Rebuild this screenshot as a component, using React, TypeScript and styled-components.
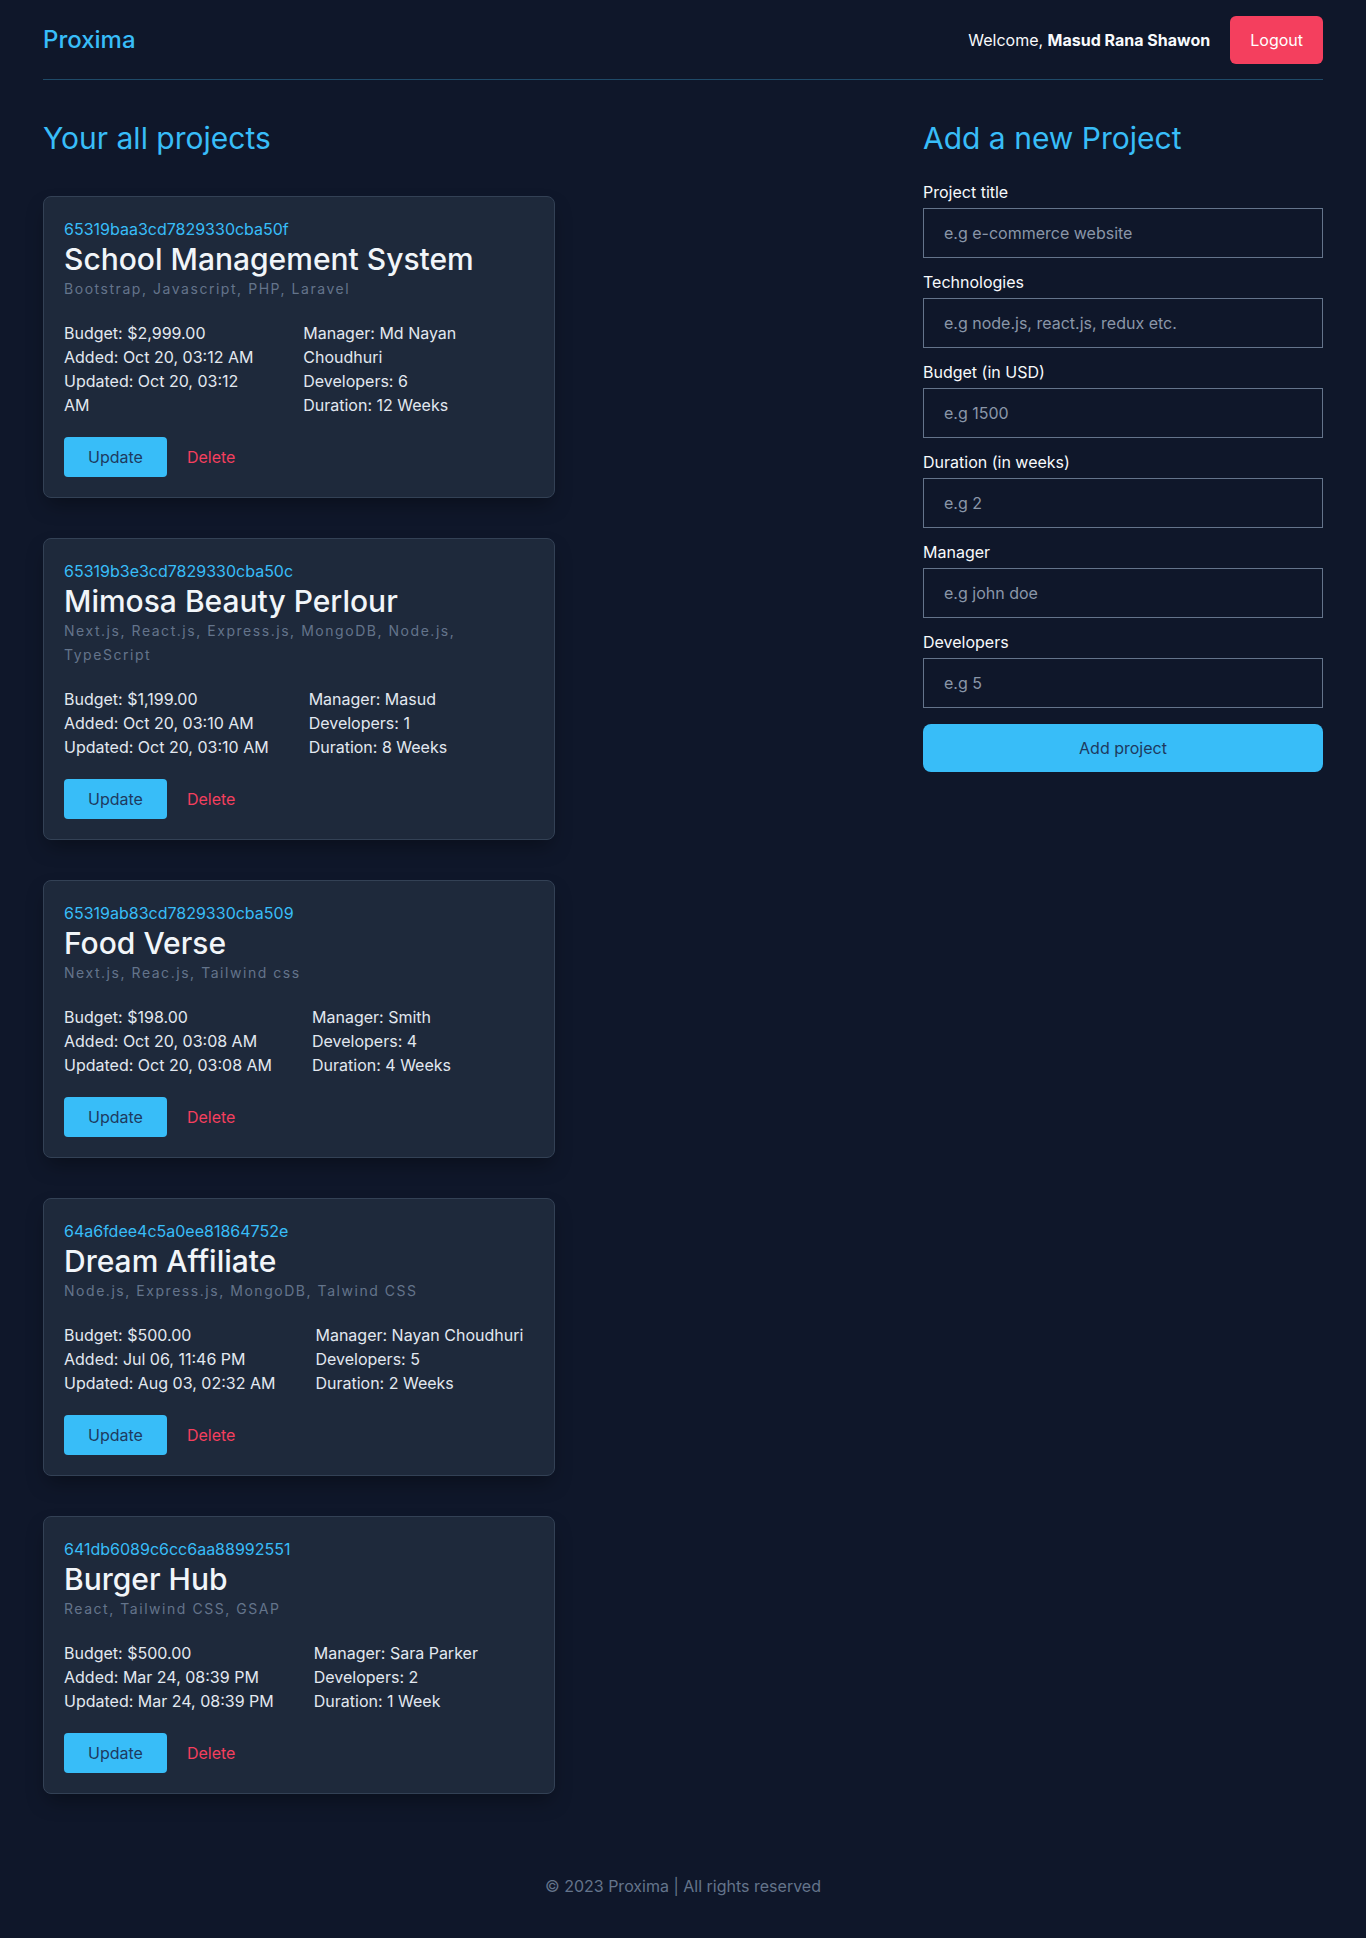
import React from "react";
import styled, { createGlobalStyle } from "styled-components";

type Project = {
  id: string;
  title: string;
  tech: string;
  budget: string;
  added: string;
  updated: string;
  manager: string;
  developers: number;
  duration: string;
};

const projects: Project[] = [
  {
    id: "65319baa3cd7829330cba50f",
    title: "School Management System",
    tech: "Bootstrap, Javascript, PHP, Laravel",
    budget: "$2,999.00",
    added: "Oct 20, 03:12 AM",
    updated: "Oct 20, 03:12 AM",
    manager: "Md Nayan Choudhuri",
    developers: 6,
    duration: "12 Weeks",
  },
  {
    id: "65319b3e3cd7829330cba50c",
    title: "Mimosa Beauty Perlour",
    tech: "Next.js, React.js, Express.js, MongoDB, Node.js, TypeScript",
    budget: "$1,199.00",
    added: "Oct 20, 03:10 AM",
    updated: "Oct 20, 03:10 AM",
    manager: "Masud",
    developers: 1,
    duration: "8 Weeks",
  },
  {
    id: "65319ab83cd7829330cba509",
    title: "Food Verse",
    tech: "Next.js, Reac.js, Tailwind css",
    budget: "$198.00",
    added: "Oct 20, 03:08 AM",
    updated: "Oct 20, 03:08 AM",
    manager: "Smith",
    developers: 4,
    duration: "4 Weeks",
  },
  {
    id: "64a6fdee4c5a0ee81864752e",
    title: "Dream Affiliate",
    tech: "Node.js, Express.js, MongoDB, Talwind CSS",
    budget: "$500.00",
    added: "Jul 06, 11:46 PM",
    updated: "Aug 03, 02:32 AM",
    manager: "Nayan Choudhuri",
    developers: 5,
    duration: "2 Weeks",
  },
  {
    id: "641db6089c6cc6aa88992551",
    title: "Burger Hub",
    tech: "React, Tailwind CSS, GSAP",
    budget: "$500.00",
    added: "Mar 24, 08:39 PM",
    updated: "Mar 24, 08:39 PM",
    manager: "Sara Parker",
    developers: 2,
    duration: "1 Week",
  },
];

const fields = [
  { label: "Project title", placeholder: "e.g e-commerce website" },
  { label: "Technologies", placeholder: "e.g node.js, react.js, redux etc." },
  { label: "Budget (in USD)", placeholder: "e.g 1500" },
  { label: "Duration (in weeks)", placeholder: "e.g 2" },
  { label: "Manager", placeholder: "e.g john doe" },
  { label: "Developers", placeholder: "e.g 5" },
];

const GlobalStyle = createGlobalStyle`
  * { box-sizing: border-box; }
  body {
    margin: 0;
    background: #0f172a;
    color: #e2e8f0;
    font-family: Inter, "Noto Sans", sans-serif;
    font-size: 16px;
    line-height: 24px;
  }
`;

const Page = styled.div`
  min-height: 100vh;
  display: flex;
  flex-direction: column;
`;

const Container = styled.div`
  width: 1280px;
  margin: 0 auto;
`;

const Header = styled.header`
  display: flex;
  align-items: center;
  justify-content: space-between;
  padding: 16px 0 15px;
  border-bottom: 1px solid #1f4a68;
`;

const Logo = styled.a`
  color: #38bdf8;
  font-size: 24px;
  line-height: 32px;
  font-weight: 500;
  text-decoration: none;
`;

const UserArea = styled.div`
  display: flex;
  align-items: center;
  gap: 20px;
  color: #f8fafc;
  b { font-weight: 700; }
`;

const LogoutButton = styled.button`
  background: #f43f5e;
  color: #fff;
  border: none;
  border-radius: 6px;
  padding: 12px 20px;
  font: inherit;
  font-size: 16px;
  line-height: 24px;
  cursor: pointer;
`;

const Main = styled.main`
  display: flex;
  justify-content: space-between;
  padding: 40px 0 40px;
`;

const LeftColumn = styled.section`
  width: 512px;
`;

const RightColumn = styled.section`
  width: 400px;
`;

const Heading = styled.h2<{ $gap: number }>`
  margin: 0 0 ${(p) => p.$gap}px;
  color: #38bdf8;
  font-size: 30px;
  line-height: 36px;
  font-weight: 400;
`;

const CardList = styled.div`
  display: flex;
  flex-direction: column;
  gap: 40px;
`;

const Card = styled.article`
  background: #1e293b;
  border: 1px solid #334155;
  border-radius: 8px;
  padding: 20px;
  box-shadow: 0 10px 20px -4px rgba(0, 0, 0, 0.35);
`;

const ProjectId = styled.div`
  color: #38bdf8;
  font-size: 16px;
  line-height: 24px;
`;

const ProjectTitle = styled.h3`
  margin: 0;
  color: #f1f5f9;
  font-size: 30px;
  line-height: 36px;
  font-weight: 500;
`;

const Tech = styled.p`
  margin: 0;
  color: #64748b;
  font-size: 14px;
  line-height: 24px;
  letter-spacing: 0.11em;
`;

const Details = styled.div`
  display: flex;
  gap: 40px;
  margin-top: 20px;
  color: #e2e8f0;
`;

const DetailCol = styled.div`
  display: flex;
  flex-direction: column;
`;

const Actions = styled.div`
  display: flex;
  align-items: center;
  gap: 20px;
  margin-top: 20px;
`;

const UpdateButton = styled.button`
  background: #38bdf8;
  color: #1e3a5f;
  border: none;
  border-radius: 4px;
  padding: 8px 24px;
  font: inherit;
  font-size: 16px;
  line-height: 24px;
  cursor: pointer;
`;

const DeleteButton = styled.button`
  background: none;
  border: none;
  padding: 0;
  color: #f43f5e;
  font: inherit;
  font-size: 16px;
  line-height: 24px;
  cursor: pointer;
`;

const Form = styled.form`
  display: flex;
  flex-direction: column;
`;

const Field = styled.label`
  display: flex;
  flex-direction: column;
  gap: 4px;
  margin-bottom: 12px;
  color: #f8fafc;
  font-weight: 400;
`;

const Input = styled.input`
  height: 50px;
  background: transparent;
  border: 1px solid #64748b;
  border-radius: 0;
  padding: 12px 20px;
  color: #e2e8f0;
  font: inherit;
  font-size: 16px;
  outline: none;
  &::placeholder { color: #8a96a8; }
`;

const SubmitButton = styled.button`
  margin-top: 4px;
  height: 48px;
  background: #38bdf8;
  color: #1e3a5f;
  border: none;
  border-radius: 8px;
  font: inherit;
  font-size: 16px;
  cursor: pointer;
`;

const Footer = styled.footer`
  padding: 40px 0;
  text-align: center;
  color: #64748b;
`;

const ProjectCard: React.FC<{ project: Project }> = ({ project }) => (
  <Card>
    <ProjectId>{project.id}</ProjectId>
    <ProjectTitle>{project.title}</ProjectTitle>
    <Tech>{project.tech}</Tech>
    <Details>
      <DetailCol>
        <span>Budget: {project.budget}</span>
        <span>Added: {project.added}</span>
        <span>Updated: {project.updated}</span>
      </DetailCol>
      <DetailCol>
        <span>Manager: {project.manager}</span>
        <span>Developers: {project.developers}</span>
        <span>Duration: {project.duration}</span>
      </DetailCol>
    </Details>
    <Actions>
      <UpdateButton>Update</UpdateButton>
      <DeleteButton>Delete</DeleteButton>
    </Actions>
  </Card>
);

const App: React.FC = () => {
  return (
    <Page>
      <GlobalStyle />
      <Container>
        <Header>
          <Logo href="#">Proxima</Logo>
          <UserArea>
            <span>
              Welcome, <b>Masud Rana Shawon</b>
            </span>
            <LogoutButton>Logout</LogoutButton>
          </UserArea>
        </Header>
        <Main>
          <LeftColumn>
            <Heading $gap={40}>Your all projects</Heading>
            <CardList>
              {projects.map((p) => (
                <ProjectCard key={p.id} project={p} />
              ))}
            </CardList>
          </LeftColumn>
          <RightColumn>
            <Heading $gap={24}>Add a new Project</Heading>
            <Form onSubmit={(e) => e.preventDefault()}>
              {fields.map((f) => (
                <Field key={f.label}>
                  {f.label}
                  <Input placeholder={f.placeholder} />
                </Field>
              ))}
              <SubmitButton type="submit">Add project</SubmitButton>
            </Form>
          </RightColumn>
        </Main>
      </Container>
      <Footer>© 2023 Proxima | All rights reserved</Footer>
    </Page>
  );
};

export default App;
